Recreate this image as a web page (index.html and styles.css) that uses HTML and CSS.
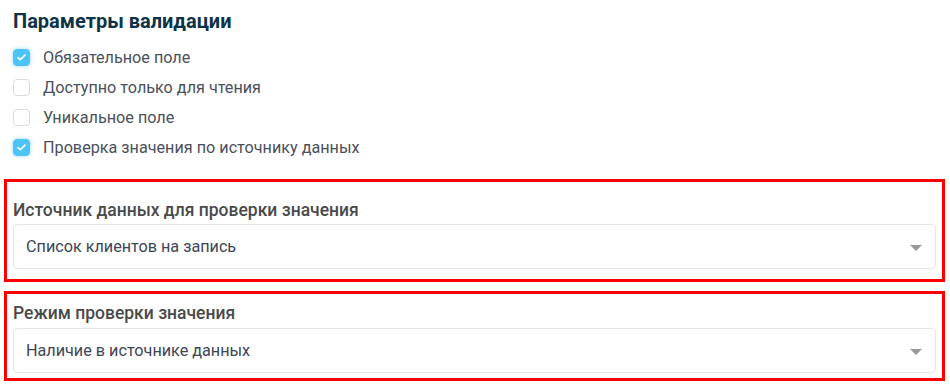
FILE: index.html
```html
<!DOCTYPE html>
<html lang="ru">
<head>
<meta charset="utf-8">
<link rel="stylesheet" href="styles.css">
</head>
<body>
<div class="page">
  <h2 class="title">Параметры валидации</h2>
  <ul class="checks">
    <li class="check"><span class="box on"><svg viewBox="0 0 16 16" width="11" height="11"><path d="M3 8.3l3.1 3L13 4.6" fill="none" stroke="#fff" stroke-width="2.4" stroke-linecap="round" stroke-linejoin="round"/></svg></span><span class="check-text">Обязательное поле</span></li>
    <li class="check"><span class="box"></span><span class="check-text">Доступно только для чтения</span></li>
    <li class="check"><span class="box"></span><span class="check-text">Уникальное поле</span></li>
    <li class="check"><span class="box on"><svg viewBox="0 0 16 16" width="11" height="11"><path d="M3 8.3l3.1 3L13 4.6" fill="none" stroke="#fff" stroke-width="2.4" stroke-linecap="round" stroke-linejoin="round"/></svg></span><span class="check-text">Проверка значения по источнику данных</span></li>
  </ul>
  <div class="field field-first">
    <div class="field-label">Источник данных для проверки значения</div>
    <div class="select"><span>Список клиентов на запись</span><span class="caret"></span></div>
  </div>
  <div class="field field-second">
    <div class="field-label">Режим проверки значения</div>
    <div class="select"><span>Наличие в источнике данных</span><span class="caret"></span></div>
  </div>
</div>
</body>
</html>
```
FILE: styles.css
```css
html, body {
  margin: 0;
  padding: 0;
  background: #fff;
}
body {
  font-family: Roboto, "Liberation Sans", sans-serif;
  width: 950px;
  height: 385px;
  overflow: hidden;
}
.page {
  padding-top: 9px;
}
.title {
  margin: 0 0 0 13px;
  font-size: 20px;
  line-height: 24px;
  font-weight: 700;
  color: #0d3348;
}
.checks {
  list-style: none;
  margin: 9px 0 0 0;
  padding: 0 0 0 13px;
}
.check {
  display: flex;
  align-items: center;
  height: 30px;
  gap: 13px;
}
.box {
  width: 15px;
  height: 15px;
  border: 1px solid #d8dbe0;
  border-radius: 4px;
  background: #fff;
  display: flex;
  align-items: center;
  justify-content: center;
  box-sizing: content-box;
}
.box.on {
  background: #4ec3f7;
  border-color: #4ec3f7;
  box-shadow: 0 0 4px rgba(78, 195, 247, 0.6);
}
.check-text {
  font-size: 16.2px;
  color: #4a505c;
}
.field {
  margin-left: 4px;
  width: 923px;
  border: 3px solid #ff0000;
  padding: 0 6px;
}
.field-first {
  margin-top: 17px;
  padding-top: 18px;
  padding-bottom: 10px;
}
.field-second {
  margin-top: 9px;
  padding-top: 9px;
  padding-bottom: 5px;
}
.field-label {
  font-size: 17.5px;
  line-height: 20px;
  font-weight: 500;
  color: #4a4a4a;
}
.field-first .field-label {
  margin-bottom: 4px;
}
.field-second .field-label {
  margin-bottom: 5px;
}
.select {
  height: 43px;
  border: 1px solid #e5e5e5;
  border-radius: 4px;
  display: flex;
  align-items: center;
  justify-content: space-between;
  padding: 0 13px 0 12px;
  font-size: 16.2px;
  color: #3b4656;
}
.caret {
  width: 0;
  height: 0;
  border-left: 6px solid transparent;
  border-right: 6px solid transparent;
  border-top: 6px solid #999;
  margin-top: 2px;
}
```
